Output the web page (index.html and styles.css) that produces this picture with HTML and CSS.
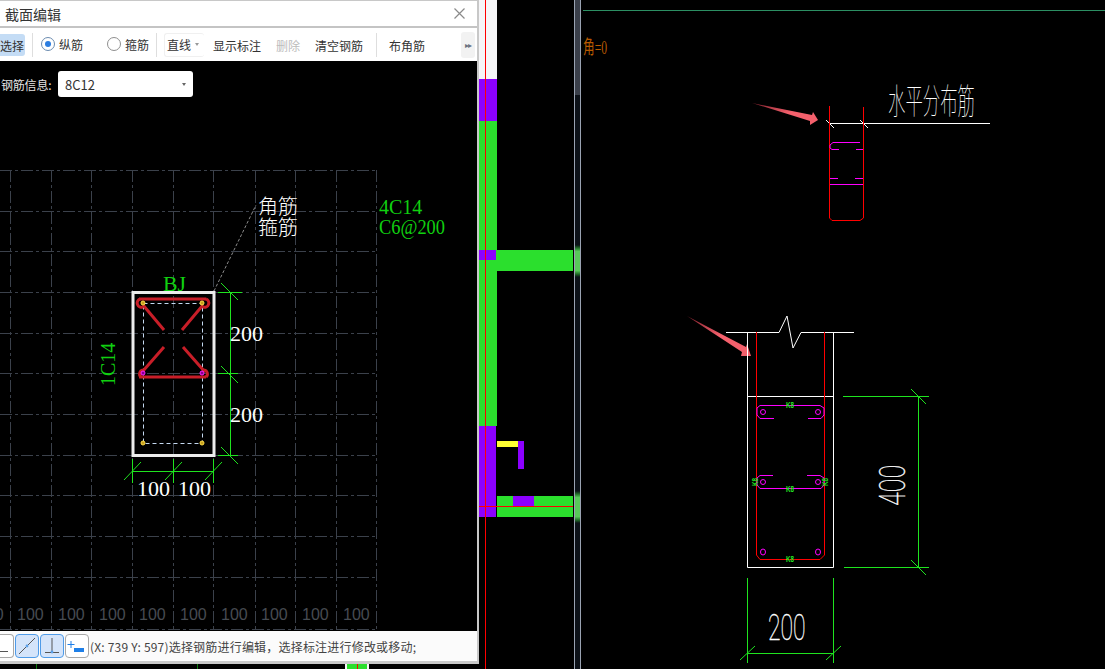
FILE: index.html
```html
<!DOCTYPE html>
<html lang="zh">
<head>
<meta charset="utf-8">
<title>截面编辑</title>
<link rel="stylesheet" href="styles.css">
</head>
<body>
<main class="stage">
  <svg class="cad" width="1105" height="669" viewBox="0 0 1105 669" xmlns="http://www.w3.org/2000/svg">
    <defs>
      <linearGradient id="glow" x1="0" y1="0" x2="0" y2="1">
        <stop class="glow-a" offset="0"/><stop class="glow-b" offset=".2"/><stop class="glow-b" offset=".8"/><stop class="glow-a" offset="1"/>
      </linearGradient>
      <linearGradient id="fade" x1="0" y1="0" x2="1" y2="1">
        <stop class="fade-a" offset="0"/><stop class="fade-b" offset=".5"/>
      </linearGradient>
    </defs>
    <!-- wall plan strip -->
    <rect class="f-white" x="479" y="0" width="18" height="79"/>
    <rect class="f-green" x="479" y="121" width="18" height="305"/>
    <rect class="f-green" x="497" y="250" width="76" height="21"/>
    <rect class="f-green" x="497" y="496" width="76" height="21"/>
    <rect class="f-purple" x="479" y="79" width="18" height="42"/>
    <rect class="f-purple" x="479" y="250" width="17" height="10"/>
    <rect class="f-purple" x="479" y="426" width="17" height="91"/>
    <rect class="f-purple" x="513" y="496" width="21" height="10"/>
    <rect class="f-purple" x="518" y="441" width="6" height="28"/>
    <rect class="f-yellow" x="497" y="441" width="21" height="6"/>
    <line class="s-red" x1="485.5" y1="0" x2="485.5" y2="669"/>
    <line class="s-red" x1="479" y1="506.5" x2="573" y2="506.5"/>
    <!-- split bar -->
    <rect class="f-split" x="575" y="0" width="5" height="95"/>
    <rect class="f-split-dark" x="575" y="95" width="5" height="574"/>
    <rect class="f-glow" x="574" y="245" width="7" height="32"/>
    <rect class="f-glow" x="574" y="491" width="7" height="32"/>
    <line class="s-split" x1="574.5" y1="0" x2="574.5" y2="669"/>
    <line class="s-split" x1="580.5" y1="0" x2="580.5" y2="669"/>
    <line class="s-teal" x1="583" y1="10.5" x2="1105" y2="10.5"/>
    <text class="t-orange" x="583" y="54" textLength="24" lengthAdjust="spacingAndGlyphs">角=0</text>

    <!-- wall section detail -->
    <path class="s-salmon-fill" d="M752 103 L812 115 L813 112 L818 120 L810 125 L810 121 Z"/>
    <line class="s-white" x1="829" y1="123.5" x2="990" y2="123.5"/>
    <path class="s-white" d="M826 120 L834 128 M860 120 L868 128"/>
    <path class="s-red" d="M829.5 106 V218 L832 220.5 H860 L863.5 218 V107"/>
    <path class="s-magenta" d="M860 142.5 H833 L830 145 V148 L832 149.5 H839 M856 149.5 H863 M830 178.5 H838 M855 178.5 H863 M830 184.5 H863"/>
    <text class="t-title" transform="translate(888 114) scale(1 2)" textLength="87" lengthAdjust="spacingAndGlyphs">水平分布筋</text>

    <path class="s-salmon-fill" d="M687 316 L746 347 L747 344 L751 356 L741 356 L742 352 Z"/>
    <path class="s-white" d="M726 332.5 H779 L787 316 L793 348 L801 332.5 H854"/>
    <path class="s-white" d="M747.5 332 V567.5 H833.5 V332 M747 396.5 H833"/>
    <path class="s-red" d="M756.5 332 V555 L760 559.5 H820 L824.5 555 V332"/>
    <path class="s-magenta" d="M820 405.5 H760 L757 408 V415 L760 418.5 H774 M808 418.5 H821 L824 415 V408 L820 405.5 M773 475.5 H760 L757 478 V485 L760 488.5 H821 L824 485 V478 L820 475.5 H807"/>
    <circle class="s-magenta" cx="763" cy="412" r="2.5"/>
    <circle class="s-magenta" cx="818" cy="412" r="2.5"/>
    <circle class="s-magenta" cx="763" cy="482" r="2.5"/>
    <circle class="s-magenta" cx="818" cy="482" r="2.5"/>
    <ellipse class="s-magenta" cx="763" cy="552" rx="2.5" ry="3"/>
    <ellipse class="s-magenta" cx="818" cy="552" rx="2.5" ry="3"/>
    <text class="t-tiny" x="786" y="408" textLength="8" lengthAdjust="spacingAndGlyphs">K8</text>
    <text class="t-tiny" x="786" y="492" textLength="8" lengthAdjust="spacingAndGlyphs">K8</text>
    <text class="t-tiny" x="786" y="562" textLength="8" lengthAdjust="spacingAndGlyphs">K8</text>
    <text class="t-tiny" transform="translate(758 486) rotate(-90)" textLength="8" lengthAdjust="spacingAndGlyphs">K8</text>
    <text class="t-tiny" transform="translate(828 486) rotate(-90)" textLength="8" lengthAdjust="spacingAndGlyphs">K8</text>
    <path class="s-green" d="M843 396.5 H929 M918.5 396 V567 M844 567.5 H929 M911 389 L926 404 M911 560 L926 575 M747.5 578 V663 M833.5 578 V663 M747 653.5 H833 M740 660 L755 646 M826 660 L841 646"/>
    <text class="t-thin" transform="translate(905 506) rotate(-90) scale(.68 1)">400</text>
    <text class="t-thin" transform="translate(768 640) scale(.62 1)">200</text>

    <!-- bits below the dialog -->
    <line class="s-green-dim" x1="36.5" y1="663" x2="36.5" y2="669"/>
    <line class="s-green-dim" x1="197.5" y1="663" x2="197.5" y2="669"/>
    <rect class="f-white" x="345" y="661" width="24" height="8"/>
    <rect class="f-green" x="347" y="661" width="20" height="8"/>
    <line class="s-red" x1="357.5" y1="661" x2="357.5" y2="669"/>
  </svg>

  <section class="dialog">
    <header class="titlebar">
      <h1 class="title">截面编辑</h1>
      <svg class="close" width="11" height="11" viewBox="0 0 11 11"><path d="M.5 .5 L10.5 10.5 M10.5 .5 L.5 10.5"/></svg>
    </header>
    <nav class="toolbar">
      <button class="tool tool-select">选择</button>
      <span class="sep sep-a"></span>
      <label class="radio radio-a"><span class="dot dot-on"></span>纵筋</label>
      <label class="radio radio-b"><span class="dot"></span>箍筋</label>
      <span class="sep sep-b"></span>
      <span class="combo">直线<i class="caret"></i></span>
      <span class="item item-show">显示标注</span>
      <span class="item item-del">删除</span>
      <span class="item item-clear">清空钢筋</span>
      <span class="sep sep-c"></span>
      <span class="item item-corner">布角筋</span>
      <span class="more">▸▸</span>
    </nav>
    <div class="canvas">
      <div class="info">
        <span class="info-label">钢筋信息:</span>
        <span class="info-select">8C12<i class="caret caret-dark"></i></span>
      </div>
      <svg class="sheet" width="477" height="570" viewBox="0 61 477 570" xmlns="http://www.w3.org/2000/svg">
        <path class="s-grid" d="M10.5 170V630 M51.5 170V630 M91.5 170V630 M132.5 170V630 M173.5 170V630 M213.5 170V630 M255.5 170V630 M295.5 170V630 M336.5 170V630 M376.5 170V630"/>
        <path class="s-grid" d="M0 170.5H377 M0 211.5H377 M0 251.5H377 M0 292.5H377 M0 333.5H377 M0 373.5H377 M0 414.5H377 M0 455.5H377 M0 495.5H377 M0 536.5H377 M0 577.5H377 M0 629.5H377"/>
        <g class="t-grid">
          <text x="-23" y="620">100</text><text x="17" y="620">100</text><text x="58" y="620">100</text><text x="99" y="620">100</text><text x="139" y="620">100</text><text x="180" y="620">100</text><text x="221" y="620">100</text><text x="261" y="620">100</text><text x="302" y="620">100</text><text x="343" y="620">100</text>
        </g>
        <path class="s-leader" d="M214 291 L256 205"/>
        <rect class="s-concrete" x="133" y="292.5" width="81" height="163"/>
        <rect class="s-dashed" x="143.5" y="303.5" width="59" height="140"/>
        <path class="s-rebar" d="M139 299 H206 M139 377 H206 M143 305 L164 330 M203 305 L182 330 M164 347 L143 371 M183 347 L205 372"/>
        <path class="s-rebar-end" d="M140 299 A4 4 0 0 0 143 307 M206 299 A4 4 0 0 1 203 307 M143 370 A4 4 0 0 0 141 377 M204 370 A4 4 0 0 1 206 377"/>
        <circle class="m-yellow" cx="143" cy="303" r="2"/>
        <circle class="m-yellow" cx="202" cy="303" r="2"/>
        <circle class="m-yellow" cx="143" cy="443" r="2"/>
        <circle class="m-yellow" cx="202" cy="443" r="2"/>
        <circle class="m-magenta" cx="143" cy="373" r="2"/>
        <circle class="m-magenta" cx="202" cy="373" r="2"/>
        <path class="s-green" d="M218 292.5 H242 M218 373.5 H238 M218 455.5 H238 M230.5 292 V455 M221 283 L238 300 M221 366 L238 383 M221 447 L238 464 M132 471.5 H214 M132.5 459 V483 M173.5 459 V483 M213.5 459 V483 M124 480 L141 462 M165 480 L182 462 M205 480 L222 462"/>
        <text class="t-dim-w" x="230" y="341">200</text>
        <text class="t-dim-w" x="230" y="422">200</text>
        <text class="t-dim-w" x="137" y="496">100</text>
        <text class="t-dim-w" x="178" y="496">100</text>
        <text class="t-note" x="258" y="214">角筋</text>
        <text class="t-note" x="258" y="235">箍筋</text>
        <text class="t-rebar" x="163" y="291" textLength="23" lengthAdjust="spacingAndGlyphs">BJ</text>
        <text class="t-rebar" transform="translate(115 386) rotate(-90)">1C14</text>
        <text class="t-rebar" x="379" y="214">4C14</text>
        <text class="t-rebar" x="379" y="234" textLength="66" lengthAdjust="spacingAndGlyphs">C6@200</text>
      </svg>
    </div>
    <footer class="status">
      <button class="snap snap-cut"><svg width="13" height="22" viewBox="0 0 13 22"><path d="M0 16.5 H8"/></svg></button>
      <button class="snap snap-on"><svg width="22" height="22" viewBox="0 0 22 22"><path d="M3 19 L19 3"/><circle cx="11" cy="11" r="1.4"/></svg></button>
      <button class="snap snap-on"><svg width="22" height="22" viewBox="0 0 22 22"><path d="M4 17.5 H18 M11 3 V17"/><circle cx="11" cy="17" r="1.4"/></svg></button>
      <button class="snap"><svg width="22" height="22" viewBox="0 0 22 22"><path class="snap-plus" d="M1.500 9.500 H8.500 M5 6 V13"/><rect class="snap-bar" x="8" y="13" width="10" height="4"/></svg></button>
      <span class="status-text">(X: 739 Y: 597)选择钢筋进行编辑，选择标注进行修改或移动;</span>
    </footer>
  </section>
</main>
</body>
</html>
```
FILE: styles.css
```css
* { box-sizing: border-box; }
html, body { margin: 0; padding: 0; background: #000; }
body { width: 1105px; height: 669px; overflow: hidden; font-family: "Noto Sans CJK SC", "Liberation Sans", sans-serif; }
.stage { position: relative; width: 1105px; height: 669px; background: #000; overflow: hidden; }
.cad { position: absolute; left: 0; top: 0; display: block; }

/* fills */
.f-white { fill: #f6f6f8; }
.f-green { fill: #2bdf2d; }
.f-purple { fill: #8c00ff; }
.f-yellow { fill: #ffff33; }
.f-split { fill: #3a3f4a; }
.f-split-dark { fill: #0c1118; }
.f-glow { fill: url(#glow); }
.glow-a { stop-color: #2bdf2d; stop-opacity: 0; }
.glow-b { stop-color: #58c85a; stop-opacity: 1; }
.fade-a { stop-color: #7a1c28; }
.fade-b { stop-color: #f4606c; }

/* strokes */
.s-red, .s-white, .s-magenta, .s-green, .s-teal, .s-split, .s-green-dim, .s-grid, .s-leader, .s-concrete, .s-dashed, .s-rebar, .s-rebar-end { fill: none; stroke-width: 1; }
.s-red { stroke: #f00; }
.s-white { stroke: #fff; }
.s-magenta { stroke: #f0f; }
.s-green { stroke: #1fe41f; }
.s-green-dim { stroke: #0a7a0a; }
.s-teal { stroke: #2c8f63; }
.s-split { stroke: #9aa3b2; }
.s-salmon-fill { fill: url(#fade); stroke: none; }
.s-grid { stroke: #3b414b; stroke-dasharray: 12 3 3 3; }
.s-leader { stroke: #8a8a8a; stroke-dasharray: 3 2; }
.s-concrete { stroke: #ececec; stroke-width: 3; }
.s-dashed { stroke: #c4d8f0; stroke-dasharray: 4 3; }
.s-rebar { stroke: #c81e28; stroke-width: 3; }
.s-rebar-end { stroke: #c81e28; stroke-width: 3; }
.m-yellow { fill: #c8a020; stroke: #ffdd44; stroke-width: 1; }
.m-magenta { fill: #8a0090; stroke: #ff20ff; stroke-width: 1; }

/* drawing text */
.t-orange { fill: #b85a00; font-family: "Liberation Serif", "Noto Sans CJK SC", serif; font-size: 19px; }
.t-thin { fill: #fff; stroke: #fff; stroke-width: .35px; font-family: Roboto, "Liberation Sans", sans-serif; font-size: 37px; font-weight: 100; }
.t-title { fill: #fff; font-family: "Noto Sans CJK SC", sans-serif; font-size: 17.5px; font-weight: 100; }
.t-tiny { fill: #22e622; font-family: "Liberation Sans", sans-serif; font-size: 9px; font-weight: 700; }
.t-grid { fill: #474b52; font-family: "Liberation Sans", sans-serif; font-size: 16px; }
.t-dim-w { fill: #fff; font-family: "Liberation Serif", serif; font-size: 22px; }
.t-note { fill: #fff; font-family: "Noto Sans CJK SC", sans-serif; font-size: 20px; font-weight: 300; }
.t-rebar { fill: #10d010; font-family: "Liberation Serif", serif; font-size: 20px; }

/* dialog window */
.dialog { position: absolute; left: 0; top: 0; width: 479px; height: 664px; display: flex; flex-direction: column; background: #000; border-top: 1px solid #c8c8c8; border-right: 2px solid #c8c8c8; border-bottom: 3px solid #c8c8c8; }
.titlebar { flex: none; height: 27px; display: flex; align-items: center; justify-content: space-between; padding: 0 12px 0 5px; background: #fff; border-bottom: 2px solid #c4c4c4; }
.title { margin: 0; font-size: 14px; font-weight: 400; line-height: 20px; color: #333; }
.close { display: block; margin-top: -1px; }
.close path { stroke: #8a8a8a; stroke-width: 1.2; fill: none; }

.toolbar { flex: none; height: 33px; display: flex; align-items: center; background: #fff; font-size: 12px; color: #333; overflow: hidden; white-space: nowrap; }
.tool { flex: none; font: inherit; color: #333; border: 0; padding: 0; }
.tool-select { width: 39px; height: 22px; margin-left: -14px; margin-top: 1px; background: #c4dcf5; border-radius: 3px; text-align: right; padding-right: 1px; }
.sep { flex: none; width: 1px; height: 24px; background: #dedede; }
.sep-a { margin-left: 7px; }
.radio { flex: none; display: flex; align-items: center; gap: 4px; margin-top: -1px; }
.radio-a { margin-left: 8px; }
.radio-b { margin-left: 24px; }
.dot { flex: none; width: 14px; height: 14px; border: 1px solid #8f8f8f; border-radius: 50%; background: #fff; position: relative; }
.dot-on { border-color: #6c8cb0; }
.dot-on::after { content: ""; position: absolute; left: 3px; top: 3px; width: 6px; height: 6px; border-radius: 50%; background: #2b7de0; }
.sep-b { margin-left: 7px; }
.combo { flex: none; display: flex; align-items: center; width: 40px; height: 24px; margin-left: 7px; padding-left: 2px; border: 1px solid #f0f0f0; border-right: 0; border-radius: 3px; }
.caret { display: block; flex: none; width: 0; height: 0; margin-left: 4px; border: 2.5px solid transparent; border-top: 3px solid #999; border-bottom: 0; }
.item { flex: none; padding-top: 2px; }
.item-show { margin-left: 9px; }
.item-del { margin-left: 15px; color: #bcbcbc; }
.item-clear { margin-left: 15px; }
.sep-c { margin-left: 13px; }
.item-corner { margin-left: 12px; }
.more { flex: none; width: 14px; height: 26px; margin-left: 36px; display: flex; align-items: center; justify-content: center; background: #f2f2f2; border-radius: 3px; color: #6a7280; font-size: 8px; letter-spacing: -1px; }

.canvas { flex: 1; min-height: 0; position: relative; background: #000; overflow: hidden; }
.sheet { display: block; }
.info { position: absolute; left: 1px; top: 10px; display: flex; align-items: center; gap: 7px; font-size: 12px; color: #e4e4e4; z-index: 1; }
.info-label { width: 50px; white-space: nowrap; letter-spacing: -.2px; }
.info-select { width: 135px; height: 26px; display: flex; align-items: center; justify-content: space-between; padding: 0 7px; background: #fff; border-radius: 3px; color: #333; font-size: 13px; }
.caret-dark { border-top-color: #666; }

.status { flex: none; height: 30px; display: flex; align-items: center; gap: 1px; background: #fbfbfb; font-size: 12px; color: #444; }
.snap { flex: none; width: 24px; height: 24px; padding: 0; border: 1px solid #a8a8a8; border-radius: 4px; background: #fff; display: flex; align-items: center; justify-content: center; }
.snap svg { display: block; }
.snap path { stroke: #555; stroke-width: 1; fill: none; }
.snap circle { fill: #5a9fe8; }
.snap .snap-plus { stroke: #1e7fe8; }
.snap-cut { width: 14px; border-left: 0; border-radius: 0 4px 4px 0; justify-content: flex-start; }
.snap-on { background: #d4e4fa; border-color: #4f9be8; }
.snap-bar { fill: #1e7fe8; }
.status-text { margin-left: 0; white-space: nowrap; letter-spacing: .2px; }
```
